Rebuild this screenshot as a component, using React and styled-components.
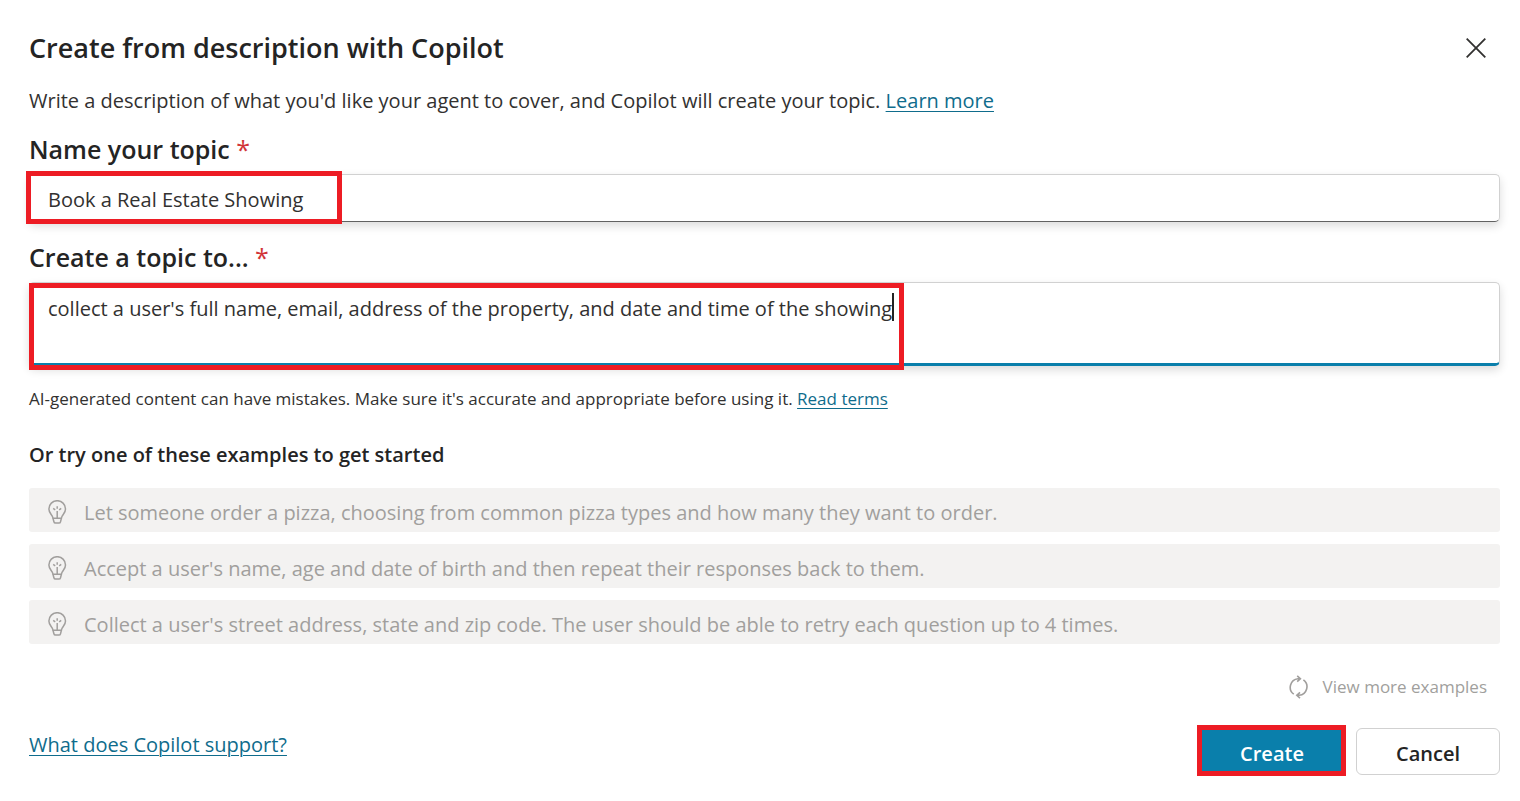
import React, { useState } from "react";
import styled, { createGlobalStyle } from "styled-components";

const GlobalStyle = createGlobalStyle`
  *, *::before, *::after { box-sizing: border-box; }
  body { margin: 0; background: #ffffff; }
  body, button, input, textarea {
    font-family: "Open Sans", "Noto Sans", sans-serif;
  }
`;

const Dialog = styled.main`
  display: flex;
  flex-direction: column;
  padding: 28px 20px 24px 29px;
  color: #323130;
  font-size: 20px;
  line-height: 28px;
`;

const Header = styled.header`
  display: flex;
  align-items: center;
  justify-content: space-between;
`;

const Title = styled.h1`
  margin: 0;
  color: #242424;
  font-size: 27px;
  font-weight: 600;
  line-height: 40px;
`;

const CloseButton = styled.button`
  display: flex;
  padding: 10px 14px;
  border: 0;
  background: none;
  color: #323130;
`;

const Description = styled.p`
  margin: 19px 0 18px;
`;

const Link = styled.a`
  color: #0f6c8c;
  text-decoration: underline;
  text-decoration-thickness: 1px;
  text-underline-offset: 3px;
`;

const Label = styled.label`
  margin-bottom: 9px;
  color: #242424;
  font-size: 25px;
  font-weight: 600;
  line-height: 32px;
`;

const Required = styled.span`
  color: #d13438;
  font-weight: 400;
`;

const Field = styled.div`
  position: relative;
  display: flex;
  margin-bottom: 19px;
`;

const TextInput = styled.input`
  width: 100%;
  height: 48px;
  padding: 2px 18px 0;
  border: 1px solid #d1d1d1;
  border-bottom-color: #616161;
  border-radius: 5px;
  outline: 0;
  background: #ffffff;
  box-shadow: 0 4px 10px rgba(0, 0, 0, 0.14);
  color: #323130;
  font-size: 20px;
`;

const TextArea = styled.textarea`
  width: 100%;
  height: 84px;
  padding: 12px 18px;
  border: 1px solid #d1d1d1;
  border-bottom: 3px solid #0a7fab;
  border-radius: 5px;
  outline: 0;
  resize: none;
  overflow: hidden;
  background: #ffffff;
  box-shadow: 0 4px 10px rgba(0, 0, 0, 0.14);
  color: #323130;
  caret-color: transparent;
  font-size: 20px;
  line-height: 28px;
`;

const Caret = styled.span`
  position: absolute;
  top: 11px;
  left: 863px;
  width: 2px;
  height: 28px;
  background: #242424;
`;

const Highlight = styled.span`
  position: absolute;
  inset: ${(p) => p.$inset};
  width: ${(p) => p.$width};
  border: 5px solid #ed1c24;
  pointer-events: none;
`;

const Note = styled.p`
  margin: 2px 0 30px;
  font-size: 17px;
  line-height: 24px;
`;

const ExamplesHeading = styled.h2`
  margin: 0 0 19px;
  color: #242424;
  font-size: 20px;
  font-weight: 600;
  line-height: 28px;
`;

const Examples = styled.div`
  display: flex;
  flex-direction: column;
  gap: 12px;
`;

const Example = styled.button`
  display: flex;
  align-items: center;
  gap: 16px;
  height: 44px;
  padding: 4px 18px 0 19px;
  border: 0;
  border-radius: 3px;
  background: #f3f2f1;
  color: #a19f9d;
  font-size: 20px;
  text-align: left;
`;

const MoreButton = styled.button`
  display: flex;
  align-items: center;
  align-self: flex-end;
  gap: 14px;
  margin: 31px 0 29px;
  padding: 0 13px 0 0;
  border: 0;
  background: none;
  color: #a19f9d;
  font-size: 17px;
  line-height: 24px;
`;

const Footer = styled.footer`
  display: flex;
  align-items: flex-start;
  justify-content: space-between;
`;

const SupportLink = styled(Link)`
  padding: 3px 0;
`;

const Actions = styled.div`
  display: flex;
  gap: 12px;
`;

const ActionSlot = styled.div`
  position: relative;
`;

const ActionButton = styled.button`
  width: 144px;
  height: 47px;
  padding: 4px 0 0;
  border: 1px solid ${(p) => (p.$primary ? "#0a7fab" : "#d1d1d1")};
  border-radius: 6px;
  background: ${(p) => (p.$primary ? "#0a7fab" : "#ffffff")};
  color: ${(p) => (p.$primary ? "#ffffff" : "#242424")};
  font-size: 20px;
  font-weight: 600;
`;

const CloseIcon = () => (
  <svg width="20" height="20" viewBox="0 0 20 20" fill="none" stroke="currentColor" strokeWidth="1.8" aria-hidden="true">
    <path d="M.7.7l18.6 18.6M19.3.7L.7 19.3" />
  </svg>
);

const BulbIcon = () => (
  <svg width="20" height="24" viewBox="0 0 20 24" fill="none" stroke="currentColor" strokeWidth="1.5" aria-hidden="true">
    <path d="M5 18.2C4.6 14.8.9 13.6.9 8.9a8.3 8.2 0 0 1 16.6 0c0 4.7-3.7 5.9-4.1 9.3z" />
    <path d="M5 18.2l.9 3.6q.3 1.3 1.6 1.3h3.4q1.3 0 1.6-1.3l.9-3.6M9.2 11v7.2M9.2 6.3v2.4M5.2 8.4l2 1.5M13.2 8.4l-2 1.5" />
  </svg>
);

const RefreshIcon = () => (
  <svg width="20" height="24" viewBox="0 0 20 24" fill="none" stroke="currentColor" strokeWidth="1.6" aria-hidden="true">
    <path d="M4.8 19.2A8.6 8.6 0 0 1 9 3.7h2.2M8.2.8l3.2 2.9-3.2 2.9" />
    <path d="M14.4 4.8a8.6 8.6 0 0 1-4.2 15.5H8M11 23.2l-3.2-2.9 3.2-2.9" />
  </svg>
);

const EXAMPLES = [
  "Let someone order a pizza, choosing from common pizza types and how many they want to order.",
  "Accept a user's name, age and date of birth and then repeat their responses back to them.",
  "Collect a user's street address, state and zip code. The user should be able to retry each question up to 4 times.",
];

export default function App() {
  const [name, setName] = useState("Book a Real Estate Showing");
  const [details, setDetails] = useState(
    "collect a user's full name, email, address of the property, and date and time of the showing"
  );

  return (
    <>
      <GlobalStyle />
      <Dialog>
        <Header>
          <Title>Create from description with Copilot</Title>
          <CloseButton type="button" aria-label="Close">
            <CloseIcon />
          </CloseButton>
        </Header>
        <Description>
          Write a description of what you'd like your agent to cover, and Copilot will create your topic.{" "}
          <Link href="#learn">Learn more</Link>
        </Description>

        <Label htmlFor="topic-name">
          Name your topic <Required>*</Required>
        </Label>
        <Field>
          <TextInput id="topic-name" value={name} onChange={(e) => setName(e.target.value)} />
          <Highlight $inset="-3px auto -2px -3px" $width="316px" />
        </Field>

        <Label htmlFor="topic-details">
          Create a topic to... <Required>*</Required>
        </Label>
        <Field>
          <TextArea id="topic-details" value={details} onChange={(e) => setDetails(e.target.value)} />
          <Caret />
          <Highlight $inset="1px auto -4px 0" $width="875px" />
        </Field>

        <Note>
          AI-generated content can have mistakes. Make sure it's accurate and appropriate before using it.{" "}
          <Link href="#terms">Read terms</Link>
        </Note>

        <ExamplesHeading>Or try one of these examples to get started</ExamplesHeading>
        <Examples>
          {EXAMPLES.map((text) => (
            <Example type="button" key={text}>
              <BulbIcon />
              {text}
            </Example>
          ))}
        </Examples>
        <MoreButton type="button">
          <RefreshIcon />
          View more examples
        </MoreButton>

        <Footer>
          <SupportLink href="#support">What does Copilot support?</SupportLink>
          <Actions>
            <ActionSlot>
              <ActionButton type="button" $primary>
                Create
              </ActionButton>
              <Highlight $inset="-3px -2px -1px -3px" $width="auto" />
            </ActionSlot>
            <ActionButton type="button">Cancel</ActionButton>
          </Actions>
        </Footer>
      </Dialog>
    </>
  );
}
